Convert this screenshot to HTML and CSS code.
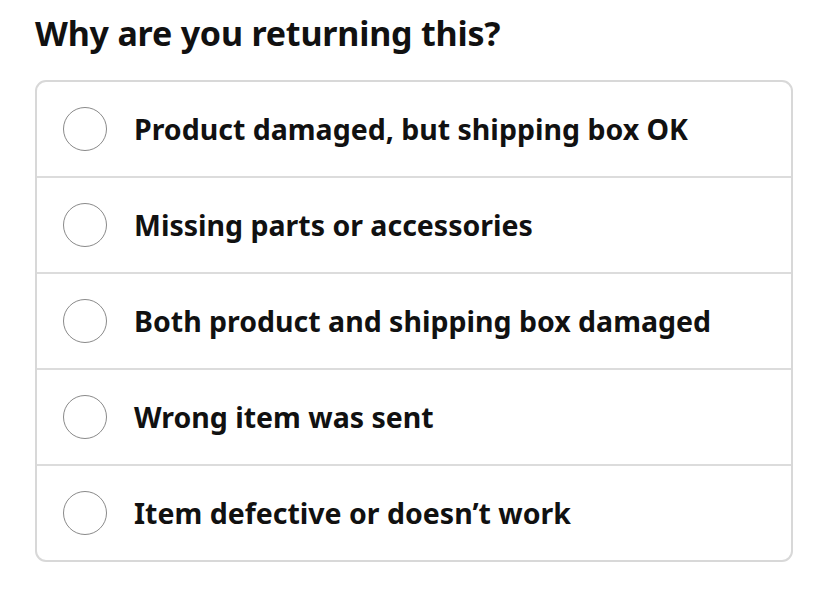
FILE: index.html
```html
<!DOCTYPE html>
<html lang="en">
<head>
<meta charset="utf-8">
<link rel="stylesheet" href="styles.css">
</head>
<body>
<div class="page">
  <h1 class="title">Why are you returning this?</h1>
  <div class="options">
    <label class="option"><span class="radio"></span><span class="label">Product damaged, but shipping box OK</span></label>
    <label class="option"><span class="radio"></span><span class="label">Missing parts or accessories</span></label>
    <label class="option"><span class="radio"></span><span class="label">Both product and shipping box damaged</span></label>
    <label class="option"><span class="radio"></span><span class="label">Wrong item was sent</span></label>
    <label class="option"><span class="radio"></span><span class="label">Item defective or doesn’t work</span></label>
  </div>
</div>
</body>
</html>
```

FILE: styles.css
```css
html, body {
  margin: 0;
  padding: 0;
  background: #ffffff;
}
.page {
  padding: 15px 35px 0 35px;
  width: 758px;
  font-family: "Noto Sans", "Open Sans", "Liberation Sans", sans-serif;
  color: #111111;
}
.title {
  margin: 0 0 29px 0;
  font-size: 34px;
  font-weight: 700;
  line-height: 36px;
  letter-spacing: -0.2px;
}
.options {
  border: 2px solid #d8d8d8;
  border-radius: 11px;
  display: flex;
  flex-direction: column;
}
.option {
  display: flex;
  align-items: center;
  height: 94px;
  padding-left: 26px;
  border-top: 2px solid #dcdcdc;
}
.option:first-child {
  border-top: none;
}
.radio {
  width: 42px;
  height: 42px;
  border: 1.5px solid #8a8a8a;
  border-radius: 50%;
  flex: none;
  background: #fff;
}
.label {
  margin-left: 27px;
  font-size: 28.5px;
  font-weight: 700;
}
```
